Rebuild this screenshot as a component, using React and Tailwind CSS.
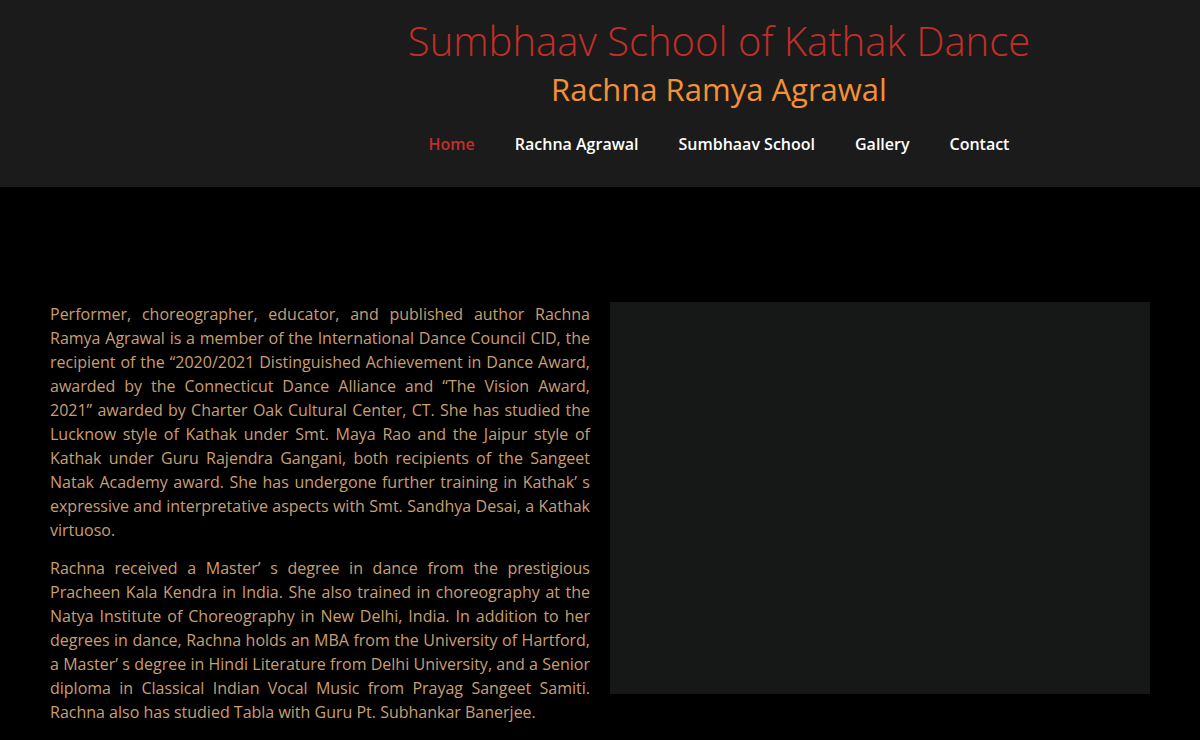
export default function App() {
  const nav = ["Home", "Rachna Agrawal", "Sumbhaav School", "Gallery", "Contact"];
  return (
    <div className="min-h-[740px] bg-black" style={{ fontFamily: '"Open Sans", "Noto Sans", sans-serif' }}>
      <header className="h-[187px] bg-[#1b1b1b] pl-[378px] pt-[14px]">
        <div className="w-[682px] text-center">
          <h1 className="whitespace-nowrap text-[40px] font-light leading-[54px] text-[#c22f29]">Sumbhaav School of Kathak Dance</h1>
          <h2 className="whitespace-nowrap text-[31px] leading-[42px] text-[#f39136]">Rachna Ramya Agrawal</h2>
          <nav className="mt-[22px] flex justify-center gap-[40px] whitespace-nowrap text-[16px] font-semibold">
            {nav.map((n, i) => (
              <a key={n} className={i === 0 ? "text-[#c22f29]" : "text-white"}>{n}</a>
            ))}
          </nav>
        </div>
      </header>
      <main className="flex gap-[20px] px-[50px] pt-[115px]">
        <div className="w-[540px] text-justify text-[16px] leading-[24px] text-[#c99f72]">
          <p>
            Performer, choreographer, educator, and published author Rachna Ramya Agrawal is a member of the International Dance Council CID, the recipient of the  “2020/2021 Distinguished Achievement in Dance Award, awarded by the Connecticut Dance Alliance and  “The Vision Award, 2021”  awarded by Charter Oak Cultural Center, CT. She has studied the Lucknow style of Kathak under Smt. Maya Rao and the Jaipur style of Kathak under Guru Rajendra Gangani, both recipients of the Sangeet Natak Academy award. She has undergone further training in Kathak’ s expressive and interpretative aspects with Smt. Sandhya Desai, a Kathak virtuoso.
          </p>
          <p className="mt-[14px]">
            Rachna received a Master’ s degree in dance from the prestigious Pracheen Kala Kendra in India. She also trained in choreography at the Natya Institute of Choreography in New Delhi, India. In addition to her degrees in dance, Rachna holds an MBA from the University of Hartford, a Master’ s degree in Hindi Literature from Delhi University, and a Senior diploma in Classical Indian Vocal Music from Prayag Sangeet Samiti. Rachna also has studied Tabla with Guru Pt. Subhankar Banerjee.
          </p>
        </div>
        <div className="h-[392px] w-[540px] bg-[#161818]" />
      </main>
    </div>
  );
}
